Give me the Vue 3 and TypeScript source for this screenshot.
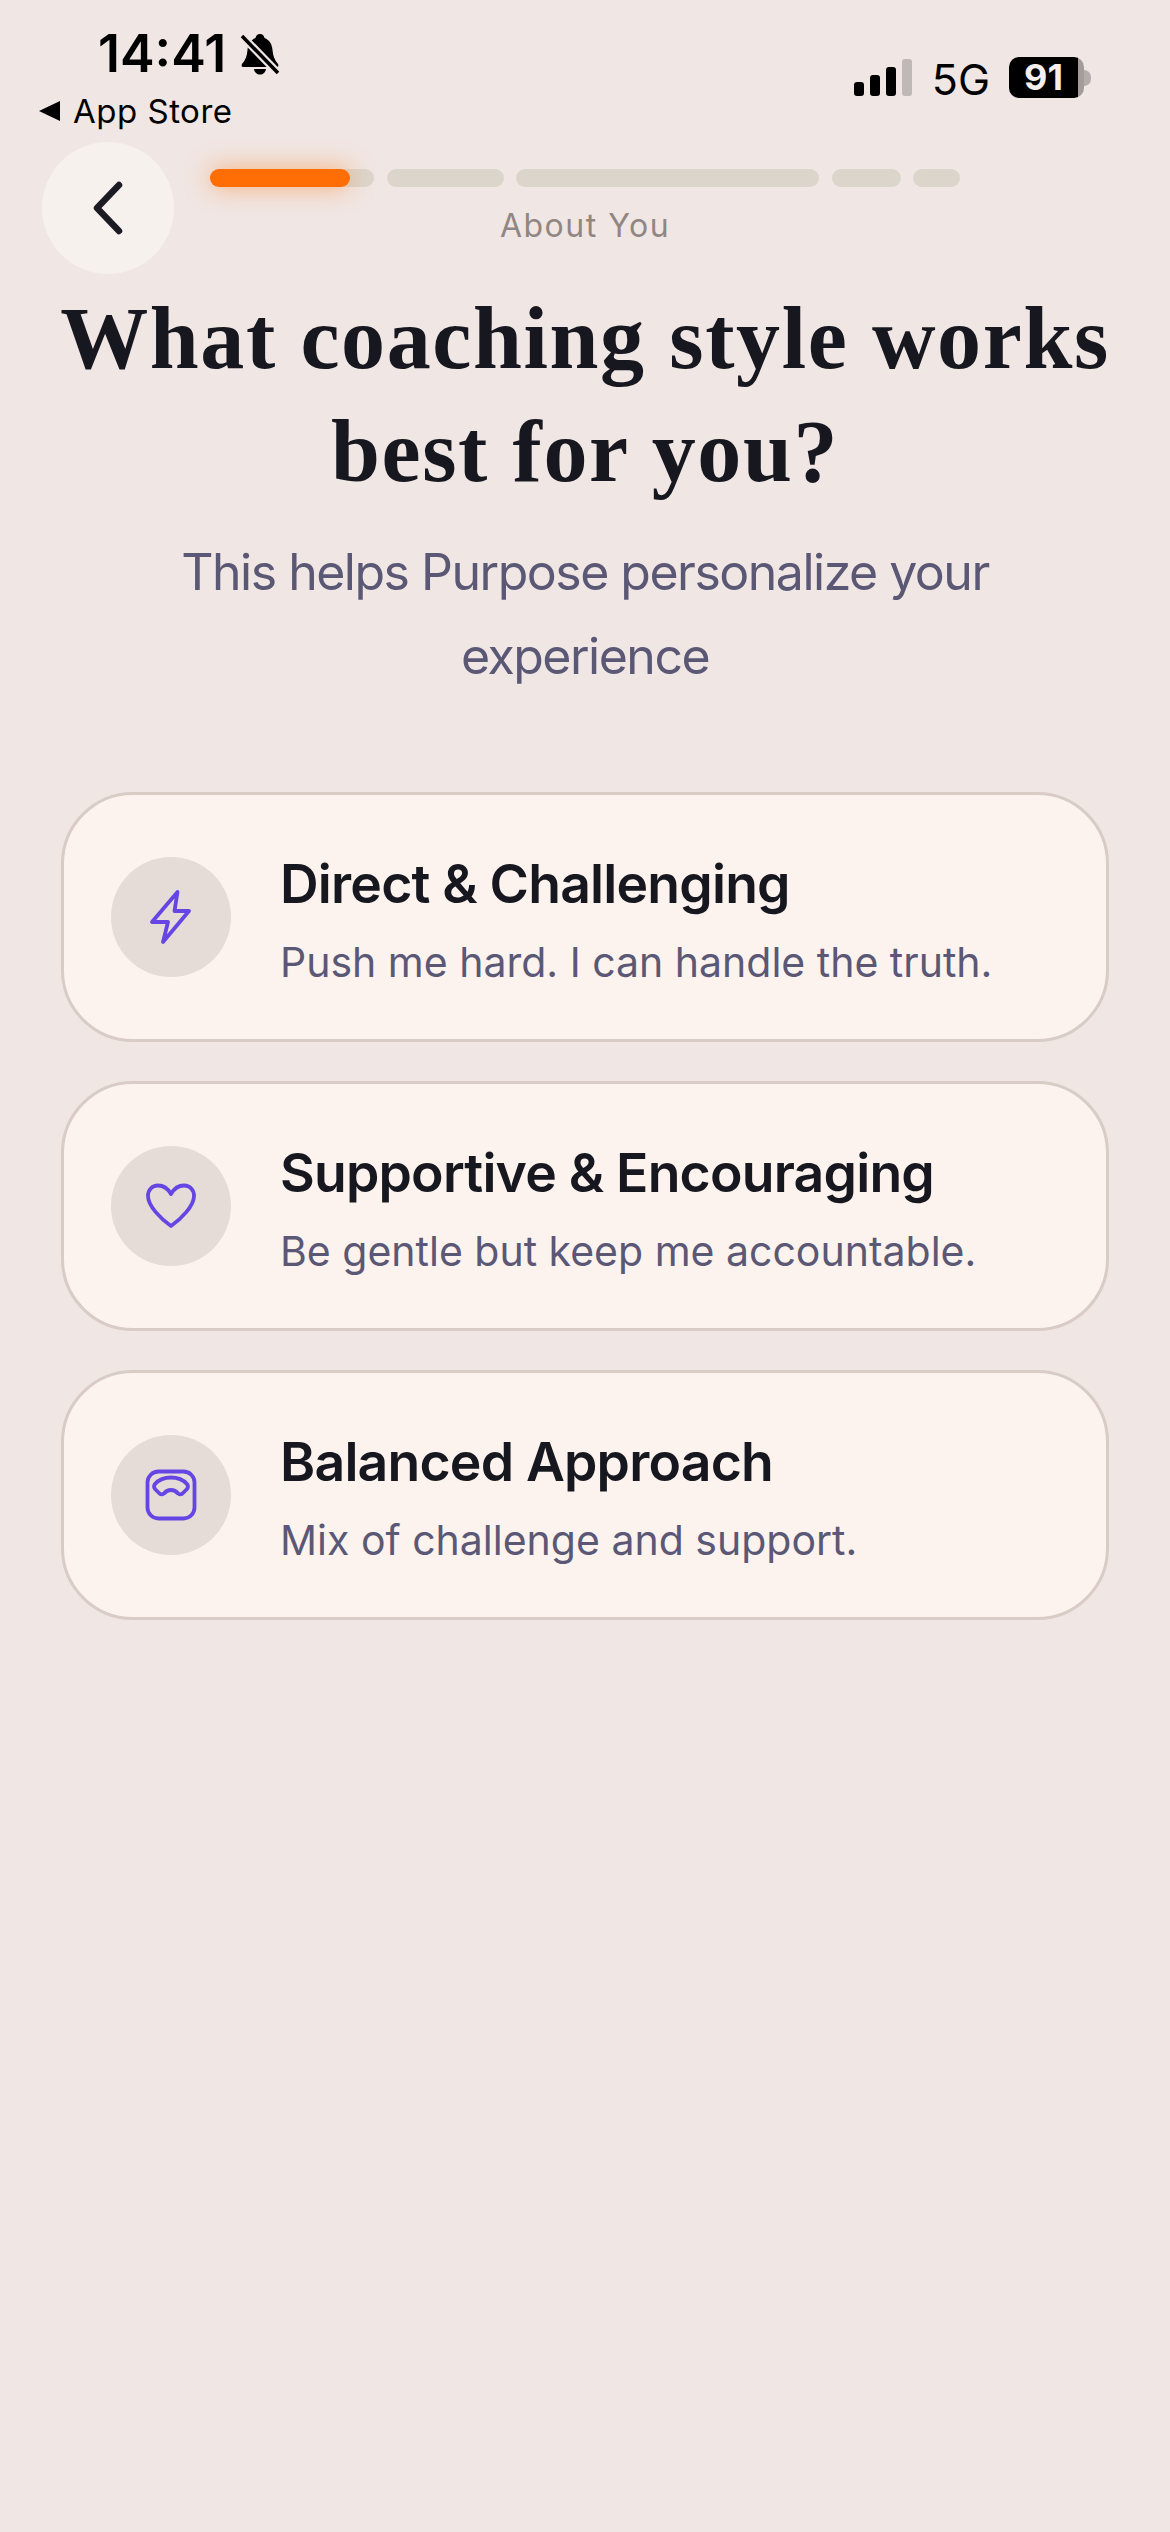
<script setup lang="ts">
const segments: number[] = [164, 117, 303, 69, 47]

interface Option {
  id: string
  title: string
  desc: string
}

const options: Option[] = [
  { id: 'zap', title: 'Direct & Challenging', desc: 'Push me hard. I can handle the truth.' },
  { id: 'heart', title: 'Supportive & Encouraging', desc: 'Be gentle but keep me accountable.' },
  { id: 'scale', title: 'Balanced Approach', desc: 'Mix of challenge and support.' }
]
</script>

<template>
  <div class="page">
    <div class="status">
      <div class="status-left">
        <div class="time-row">
          <span class="time">14:41</span>
          <svg class="bell" viewBox="0 0 40 42" width="40" height="42">
            <path d="M20 1c3 0 4 2 4.500 4 5 2 7.500 6 8 12 .5 6 2 10 5.500 14 1 2 0 3-2 3H4c-2 0-3-1-2-3 3.500-4 5-8 5.500-14 .5-6 3-10 8-12C16 3 17 1 20 1Z" fill="#000"/>
            <path d="M14 36h12c-.5 3.500-3 5.500-6 5.500s-5.500-2-6-5.500Z" fill="#000"/>
            <path d="M3 4 37 39" stroke="#f0e6e3" stroke-width="8"/>
            <path d="M2 3 38 40" stroke="#000" stroke-width="3.500"/>
          </svg>
        </div>
        <div class="back-app">
          <span class="tri"></span>
          <span class="app-store">App Store</span>
        </div>
      </div>
      <div class="status-right">
        <div class="signal">
          <i class="b1"></i><i class="b2"></i><i class="b3"></i><i class="b4"></i>
        </div>
        <span class="net">5G</span>
        <div class="battery">
          <div class="battery-body">91</div>
          <span class="nub"></span>
        </div>
      </div>
    </div>

    <header class="head">
      <button class="back" aria-label="Back">
        <svg viewBox="0 0 32 54" width="32" height="54">
          <path d="M27 4 5 27l22 23" fill="none" stroke="#1b1b24" stroke-width="6.500" stroke-linecap="round" stroke-linejoin="round"/>
        </svg>
      </button>
      <div class="progress-col">
        <div class="progress">
          <div v-for="(w, i) in segments" :key="i" class="seg" :style="{ width: w + 'px' }">
            <div v-if="i === 0" class="fill"></div>
          </div>
        </div>
        <div class="step">About You</div>
      </div>
    </header>

    <h1 class="title">What coaching style works<br />best for you?</h1>
    <p class="sub">This helps Purpose personalize your<br />experience</p>

    <div class="cards">
      <div v-for="o in options" :key="o.id" class="card">
        <div class="icon">
          <svg viewBox="0 0 60 60" width="60" height="60" fill="none" stroke="#6546e4" stroke-width="3.800" stroke-linejoin="round" stroke-linecap="round">
            <path v-if="o.id === 'zap'" d="M36.500 5 11 35h16l-5 20 26-31H33.500Z"/>
            <path v-else-if="o.id === 'heart'" d="M30 18C26 11 21 9.500 17 9.500 11 9.500 7 14 7 20c0 10 13 23 23 30 10-7 23-20 23-30 0-6-4-10.500-10-10.500-4 0-9 1.500-13 8.500Z"/>
            <template v-else>
              <rect x="6.500" y="6.500" width="47" height="47" rx="11"/>
              <path d="M14 19c4.500-5 10-6.500 16-6.500S41.500 14 46 19c1.500 2 1.500 3 0 5l-4 4c-1.500 1.800-3.500 1.500-5 .5C35 26 32.500 25 30 25s-5 1-7 3.500c-1.500 1-3.500 1.300-5-.5l-4-4c-1.500-2-1.500-3 0-5Z"/>
            </template>
          </svg>
        </div>
        <div class="card-text">
          <div class="card-title">{{ o.title }}</div>
          <div class="card-desc">{{ o.desc }}</div>
        </div>
      </div>
    </div>
  </div>
</template>

<style>
html, body {
  margin: 0;
  background: #f0e6e3;
}
</style>

<style scoped>
.page {
  width: 1170px;
  height: 2532px;
  background: #f0e6e3;
  font-family: Inter, "Liberation Sans", sans-serif;
  overflow: hidden;
}
.status {
  display: flex;
  justify-content: space-between;
  height: 142px;
  box-sizing: border-box;
}
.status-left {
  padding: 25px 0 0 39px;
}
.time-row {
  display: flex;
  align-items: center;
  gap: 14px;
  padding-left: 59px;
  height: 58px;
}
.time {
  font-size: 52px;
  font-weight: 600;
  line-height: 58px;
  color: #000;
}
.bell {
  display: block;
}
.back-app {
  display: flex;
  align-items: center;
  gap: 13px;
  margin-top: 8px;
}
.tri {
  width: 0;
  height: 0;
  border-style: solid;
  border-width: 10px 21px 10px 0;
  border-color: transparent #000 transparent transparent;
}
.app-store {
  font-size: 33px;
  font-weight: 400;
  line-height: 40px;
  color: #000;
  letter-spacing: 0.5px;
}
.status-right {
  display: flex;
  align-items: flex-end;
  height: 98px;
  padding-right: 79px;
}
.signal {
  display: flex;
  align-items: flex-end;
  gap: 6px;
  height: 37px;
  margin-bottom: 2px;
}
.signal i {
  display: block;
  width: 10px;
  border-radius: 3px;
  background: #000;
}
.signal .b1 { height: 14px; }
.signal .b2 { height: 21px; }
.signal .b3 { height: 29px; }
.signal .b4 { height: 37px; background: #c0b8b6; }
.net {
  margin-left: 20px;
  font-size: 43px;
  line-height: 50px;
  color: #000;
  height: 50px;
  margin-bottom: -6px;
}
.battery {
  display: flex;
  align-items: center;
  margin-left: 19px;
}
.battery-body {
  width: 75px;
  height: 41px;
  border-radius: 10px;
  background: linear-gradient(90deg, #000 0, #000 92%, #a39c9a 92%);
  color: #f4eeec;
  font-size: 36px;
  font-weight: 700;
  line-height: 41px;
  text-align: center;
  padding-right: 6px;
  box-sizing: border-box;
}
.nub {
  width: 7px;
  height: 16px;
  border-radius: 0 8px 8px 0;
  background: #b4adab;
}
.head {
  display: grid;
  grid-template-columns: 210px 750px 210px;
  height: 130px;
}
.back {
  width: 132px;
  height: 132px;
  margin: 0 0 0 42px;
  padding: 0;
  border: none;
  border-radius: 50%;
  background: #f6f1ed;
  display: flex;
  align-items: center;
  justify-content: center;
}
.progress-col {
  padding-top: 27px;
}
.progress {
  display: flex;
  gap: 12.500px;
}
.seg {
  height: 18px;
  border-radius: 9px;
  background: #dcd5cc;
  position: relative;
}
.fill {
  position: absolute;
  left: 0;
  top: 0;
  width: 140px;
  height: 18px;
  border-radius: 9px;
  background: #ff6d05;
  box-shadow: 0 0 24px rgba(255, 120, 20, 0.55);
}
.step {
  margin-top: 19px;
  text-align: center;
  font-size: 32px;
  line-height: 40px;
  letter-spacing: 1.500px;
  color: #908684;
}
.title {
  margin: 10px 0 0;
  text-align: center;
  font-family: "Liberation Serif", serif;
  font-weight: 700;
  font-size: 88px;
  line-height: 113px;
  letter-spacing: 1.600px;
  color: #17171f;
}
.sub {
  margin: 22px 0 0;
  text-align: center;
  font-size: 50px;
  line-height: 84px;
  letter-spacing: -1.500px;
  color: #5b5876;
}
.cards {
  display: flex;
  flex-direction: column;
  gap: 39px;
  margin: 94px 61px 0;
}
.card {
  display: flex;
  align-items: center;
  gap: 49px;
  height: 250px;
  box-sizing: border-box;
  padding: 0 47px;
  border: 3px solid #d9ccc6;
  border-radius: 72px;
  background: #fcf3ef;
}
.icon {
  width: 120px;
  height: 120px;
  border-radius: 50%;
  background: #e5dcd7;
  display: flex;
  align-items: center;
  justify-content: center;
  flex: none;
}
.card-text {
  padding-top: 5px;
}
.card-title {
  font-size: 53.500px;
  font-weight: 600;
  line-height: 66px;
  letter-spacing: -0.800px;
  color: #17171f;
}
.card-desc {
  margin-top: 18px;
  font-size: 41px;
  line-height: 54px;
  color: #5b5876;
}
</style>
